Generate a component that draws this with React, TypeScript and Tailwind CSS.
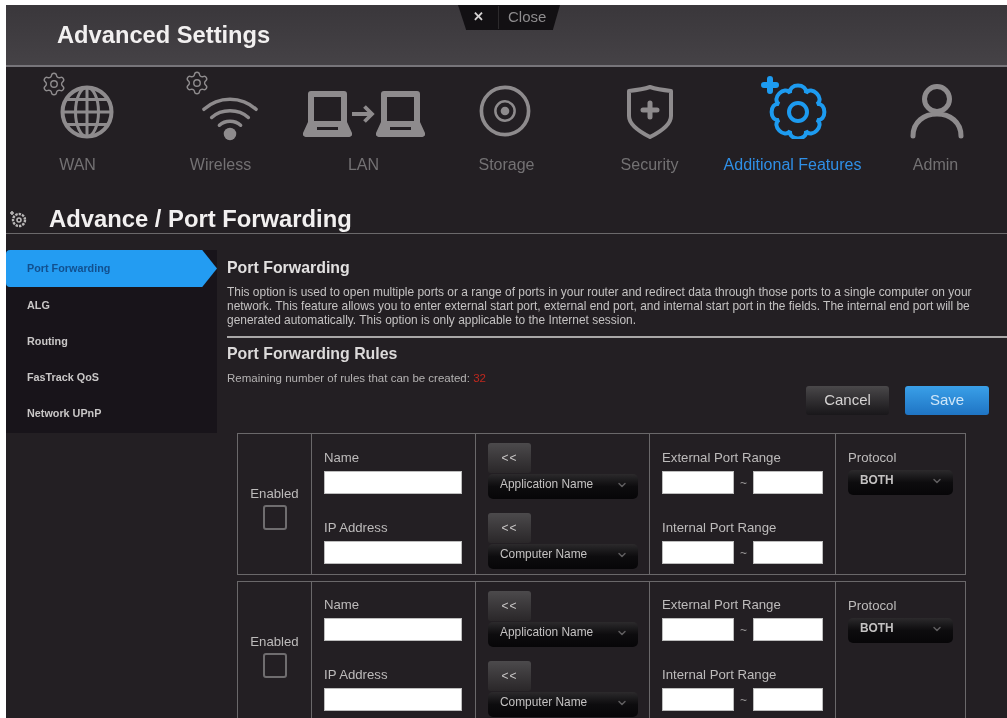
import React from 'react';
import { ChevronDown, Settings } from 'lucide-react';

// lobed gear outline, same shape as the router UI's "additional features" icon
const gearPath = (cx: number, cy: number, ctrl: number, inner: number, teeth: number) => {
  const step = (Math.PI * 2) / teeth;
  const parts: string[] = [];
  for (let i = 0; i < teeth; i++) {
    const a = i * step - Math.PI / 2;
    const p = (r: number, off: number) => `${(cx + r * Math.cos(a + off)).toFixed(2)} ${(cy + r * Math.sin(a + off)).toFixed(2)}`;
    if (i === 0) parts.push(`M${p(inner, -step * 0.5)}`);
    parts.push(`C${p(ctrl, -step * 0.42)} ${p(ctrl, step * 0.42)} ${p(inner, step * 0.5)}`);
  }
  return parts.join(' ') + 'Z';
};

const Globe = () => (
  <svg width="54" height="54" viewBox="0 0 54 54" fill="none" stroke="#8e8b8d" strokeWidth="3">
    <circle cx="27" cy="27" r="24.5" strokeWidth="4" />
    <ellipse cx="27" cy="27" rx="11.5" ry="24.5" />
    <path d="M27 3v48M3 27h48M7 14.5h40M7 39.5h40" />
  </svg>
);

const Wifi = () => (
  <svg width="56" height="46" viewBox="0 0 58 46" fill="none" stroke="#8e8b8d" strokeWidth="3.6" strokeLinecap="round">
    <path d="M2 14C17 0 41 0 56 14" />
    <path d="M10 22.5C20 13 38 13 48 22.5" />
    <path d="M18 30.5C24 25 34 25 40 30.5" />
    <circle cx="29" cy="39.5" r="6.5" fill="#8e8b8d" stroke="none" />
  </svg>
);

const Laptop = () => (
  <svg width="49" height="46" viewBox="0 0 49 46" fill="#8e8b8d">
    <path fillRule="evenodd" d="M8 0h33a3 3 0 0 1 3 3v28l5 11a3 3 0 0 1-3 4H3a3 3 0 0 1-3-4l5-11V3a3 3 0 0 1 3-3ZM11 6v24h27V6H11ZM14 36v3h21v-3H14Z" />
  </svg>
);

const LanIcon = () => (
  <div className="mb-[2px] flex items-center">
    <Laptop />
    <svg width="24" height="20" viewBox="0 0 24 20" fill="none" stroke="#8e8b8d" strokeWidth="3.8">
      <path d="M0 10h20M12.5 2.5l7.5 7.5-7.5 7.5" />
    </svg>
    <Laptop />
  </div>
);

const Disc = () => (
  <svg width="52" height="52" viewBox="0 0 54 54" fill="none" stroke="#8e8b8d" className="mb-[2px] -ml-[3px]">
    <circle cx="27" cy="27" r="24.5" strokeWidth="3.8" />
    <circle cx="27" cy="27" r="10" strokeWidth="2.6" />
    <circle cx="27" cy="27" r="4.5" fill="#8e8b8d" stroke="none" />
  </svg>
);

const Shield = () => (
  <svg width="46" height="54" viewBox="0 0 46 54" fill="none" stroke="#8e8b8d">
    <path d="M2 6C11 5 17 4 23 2c6 2 12 3 21 4v25c0 9-11 16-21 21C13 47 2 40 2 31V6Z" strokeWidth="4" strokeLinejoin="round" />
    <path d="M23 18v14M16 25h14" strokeWidth="5" strokeLinecap="round" />
  </svg>
);

const BlueGear = () => (
  <svg width="68" height="68" viewBox="0 0 68 68" fill="none" stroke="#1d9bf0" className="ml-[1px]">
    <path d={gearPath(39, 41, 30.5, 20.5, 8)} strokeWidth="4" />
    <circle cx="39" cy="41" r="9" strokeWidth="4" />
    <path d="M11 8v12M5 14h12" strokeWidth="6" strokeLinecap="round" />
  </svg>
);

const User = () => (
  <svg width="56" height="56" viewBox="0 0 56 56" fill="none" stroke="#8e8b8d" strokeWidth="5" strokeLinecap="round" className="ml-[2px]">
    <circle cx="28" cy="16" r="12.5" />
    <path d="M4 53C4 39 15 31 28 31s24 8 24 22" />
  </svg>
);

const navItems = [
  {
    label: 'WAN',
    icon: (
      <div className="relative ml-[18px]">
        <Settings size={26} strokeWidth={1.3} className="absolute -left-[19px] -top-[14px] text-[#8e8b8d]" />
        <Globe />
      </div>
    ),
  },
  {
    label: 'Wireless',
    icon: (
      <div className="relative -mb-[2px] ml-[18px]">
        <Settings size={26} strokeWidth={1.3} className="absolute -left-[18px] -top-[25px] text-[#8e8b8d]" />
        <Wifi />
      </div>
    ),
  },
  { label: 'LAN', icon: <LanIcon /> },
  { label: 'Storage', icon: <Disc /> },
  { label: 'Security', icon: <Shield /> },
  { label: 'Additional Features', icon: <BlueGear />, active: true },
  { label: 'Admin', icon: <User /> },
];

const sideItems = ['Port Forwarding', 'ALG', 'Routing', 'FasTrack QoS', 'Network UPnP'];

const TextBox = ({ className = 'w-[138px]' }: { className?: string }) => (
  <div className={`${className} h-[23px] bg-white border border-[#bdbdbd]`} />
);

const DarkSelect = ({ label, className }: { label: string; className: string }) => (
  <div className={`${className} h-[25px] rounded-[5px] bg-gradient-to-b from-[#2c2a2c] via-[#0d0c0e] to-[#070608] flex items-center justify-between pb-[3px] pl-[12px] pr-[10px] text-[11.9px] text-[#c4c2c2]`}>
    <span>{label}</span>
    <ChevronDown size={12} strokeWidth={3} className="text-[#5f5d5f]" />
  </div>
);

const ArrowBtn = () => (
  <div className="w-[43px] h-[30px] rounded-[3px] bg-gradient-to-b from-[#4c4a4c] to-[#2a2729] flex items-center justify-center text-[12px] tracking-[1px] text-[#c9c7c7]">
    &lt;&lt;
  </div>
);

const RangeRow = () => (
  <div className="flex items-center text-[#9a9898] text-[12px]">
    <TextBox className="w-[72px]" />
    <span className="w-[19px] text-center">~</span>
    <TextBox className="w-[70px]" />
  </div>
);

const RuleRow = ({ tall }: { tall?: boolean }) => (
  <div className={`${tall ? 'h-[150px] mt-[6px]' : 'h-[142px]'} w-[729px] shrink-0 border border-[#6a686a] flex text-[13.2px] text-[#bdbbbb]`}>
    <div className="w-[74px] border-r border-[#6a686a] flex flex-col items-center pt-[50px]">
      <span>Enabled</span>
      <div className="mt-[1px] w-[24px] h-[25px] rounded-[3px] border-2 border-[#6f6d6f]" />
    </div>
    <div className={`w-[164px] border-r border-[#6a686a] pl-[12px] ${tall ? 'pt-[13px]' : 'pt-[14px]'}`}>
      <div className="h-[23px]">Name</div>
      <TextBox />
      <div className="h-[23px] mt-[24px]">IP Address</div>
      <TextBox />
    </div>
    <div className="w-[174px] border-r border-[#6a686a] pl-[12px] pt-[9px]">
      <ArrowBtn />
      <DarkSelect label="Application Name" className="w-[150px] mt-[1px]" />
      <div className="h-[14px]" />
      <ArrowBtn />
      <DarkSelect label="Computer Name" className="w-[150px] mt-[1px]" />
    </div>
    <div className={`w-[186px] border-r border-[#6a686a] pl-[12px] ${tall ? 'pt-[13px]' : 'pt-[14px]'}`}>
      <div className="h-[23px]">External Port Range</div>
      <RangeRow />
      <div className="h-[23px] mt-[24px]">Internal Port Range</div>
      <RangeRow />
    </div>
    <div className="flex-1 pl-[12px] pt-[14px]">
      <div className="h-[22px]">Protocol</div>
      <DarkSelect label="BOTH" className="w-[105px] font-bold" />
    </div>
  </div>
);

export default function App() {
  return (
    <div className="relative h-[718px] w-[1007px] overflow-hidden bg-white pl-[6px] pt-[5px] blur-[0.5px] font-['Liberation_Sans',Arial,sans-serif]">
      <div className="flex h-[713px] flex-col bg-[#231f23]">
        <header className="h-[62px] shrink-0 border-b-2 border-[#77757a] bg-gradient-to-b from-[#3a373b] to-[#454246] pl-[51px] pt-[13px] text-[23.7px] font-bold text-[#f2f0f0]">
          Advanced Settings
        </header>

        <nav className="grid h-[134px] shrink-0 grid-cols-7">
          {navItems.map((item) => (
            <div key={item.label} className="flex flex-col items-center">
              <div className="flex h-[72px] items-end justify-center">{item.icon}</div>
              <span className={`mt-[14px] text-[16px] ${item.active ? 'text-[#2f8fe6]' : 'text-[#737173]'}`}>{item.label}</span>
            </div>
          ))}
        </nav>

        <div className="flex h-[33px] shrink-0 items-center border-b border-[#6b696b] pt-[4px] text-[23.8px] font-bold text-[#f2f0f0]">
          <svg width="18" height="18" viewBox="0 0 18 18" fill="none" stroke="#b9b7b7" strokeWidth="1.6" className="ml-[3px] mr-[22px]">
            <circle cx="10" cy="10" r="6" strokeDasharray="2.4 1" strokeWidth="2.4" />
            <circle cx="10" cy="10" r="2" />
            <path d="M3 1v4M1 3h4" />
          </svg>
          Advance / Port Forwarding
        </div>

        <div className="flex min-h-0 flex-1 pt-[16px]">
          <aside className="h-[183px] w-[211px] shrink-0 bg-[#18141a] text-[10.8px] font-bold text-[#c9c7c7]">
            {sideItems.map((s, i) =>
              i === 0 ? (
                <div
                  key={s}
                  className="flex h-[37px] items-center rounded-l-[4px] bg-[#239cf2] pl-[21px] text-[#12508f] [clip-path:polygon(0_0,93%_0,100%_50%,93%_100%,0_100%)]"
                >
                  {s}
                </div>
              ) : (
                <div key={s} className="flex h-[36px] items-center pl-[21px]">{s}</div>
              ),
            )}
          </aside>

          <main className="flex min-w-0 flex-1 flex-col pl-[10px]">
            <h2 className="mt-[9px] text-[15.9px] font-bold leading-[18px] text-[#e2e0e0]">Port Forwarding</h2>
            <p className="mt-[8px] whitespace-nowrap text-[11.95px] leading-[14px] text-[#c4c2c2]">
              This option is used to open multiple ports or a range of ports in your router and redirect data through those ports to a single computer on your
              <br />
              network. This feature allows you to enter external start port, external end port, and internal start port in the fields. The internal end port will be
              <br />
              generated automatically. This option is only applicable to the Internet session.
            </p>
            <div className="mt-[9px] h-[2px] shrink-0 bg-[#a9a7a7]" />
            <h2 className="mt-[7px] text-[15.9px] font-bold leading-[18px] text-[#dcdada]">Port Forwarding Rules</h2>
            <p className="mt-[8px] text-[11.5px] leading-[14px] text-[#b5b3b3]">
              Remaining number of rules that can be created: <span className="text-[#c0281e]">32</span>
            </p>
            <div className="mt-[1px] flex shrink-0 justify-end gap-[16px] pr-[18px]">
              <button className="h-[29px] w-[83px] rounded-[3px] bg-gradient-to-b from-[#4a484a] to-[#19171a] text-[15px] text-[#d5d3d3]">Cancel</button>
              <button className="h-[29px] w-[84px] rounded-[3px] bg-gradient-to-b from-[#3aa0e8] to-[#1f74c4] text-[15px] text-[#cfe6f8]">Save</button>
            </div>
            <div className="mt-[18px] ml-[10px]">
              <RuleRow />
              <RuleRow tall />
            </div>
          </main>
        </div>
      </div>

      <div className="absolute left-[458px] top-[5px] flex h-[25px] w-[102px] items-center bg-[#121013] pl-[15px] [clip-path:polygon(0_0,100%_0,93%_100%,8%_100%)]">
        <span className="w-[25px] text-[12.5px] font-bold text-[#d5d3d3]">✕</span>
        <span className="border-l border-[#2c2a2c] pl-[9px] text-[15px] text-[#8e8c8e]">Close</span>
      </div>
    </div>
  );
}
